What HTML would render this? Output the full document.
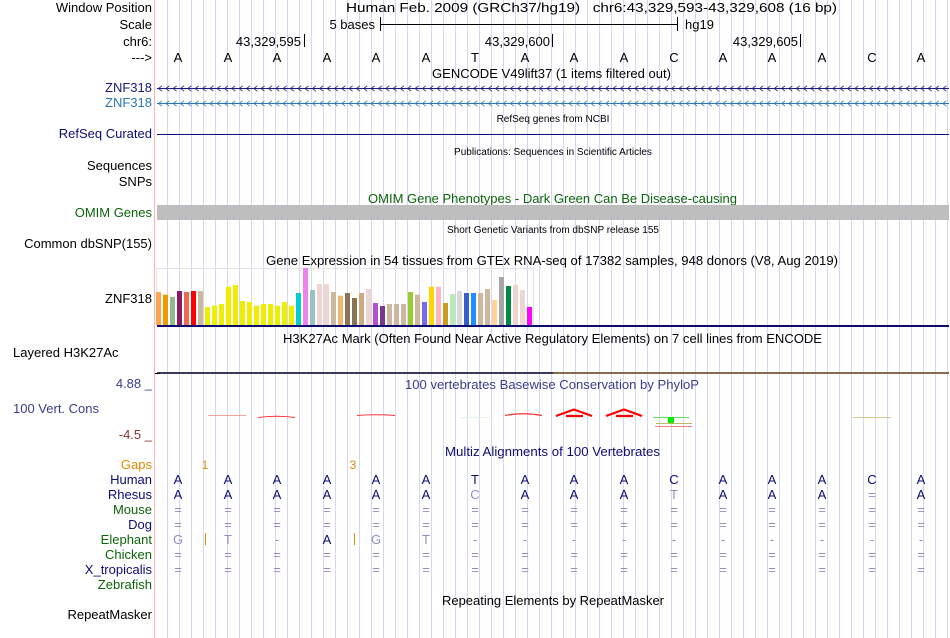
<!DOCTYPE html>
<html><head><meta charset="utf-8"><style>
html,body{margin:0;padding:0;background:#fff;}
svg{display:block;font-family:"Liberation Sans",sans-serif;}
</style></head><body>
<svg width="950" height="638" viewBox="0 0 950 638" xmlns="http://www.w3.org/2000/svg">
<defs>
<pattern id="chevA" x="157" y="84" width="7.33" height="9" patternUnits="userSpaceOnUse"><path d="M5,1.8 L1.5,4.5 L5,7.2" fill="none" stroke="#1a1a80" stroke-width="0.8"/></pattern>
<pattern id="chevB" x="157" y="99" width="7.33" height="9" patternUnits="userSpaceOnUse"><path d="M5,1.8 L1.5,4.5 L5,7.2" fill="none" stroke="#2a78b4" stroke-width="0.8"/></pattern>
</defs>
<rect width="950" height="638" fill="#fff"/>
<g stroke="#d6d6f2" stroke-width="1">
<line x1="167.5" y1="0" x2="167.5" y2="638"/><line x1="179.5" y1="0" x2="179.5" y2="638"/><line x1="191.5" y1="0" x2="191.5" y2="638"/><line x1="203.5" y1="0" x2="203.5" y2="638"/><line x1="215.5" y1="0" x2="215.5" y2="638"/><line x1="227.5" y1="0" x2="227.5" y2="638"/><line x1="239.5" y1="0" x2="239.5" y2="638"/><line x1="251.5" y1="0" x2="251.5" y2="638"/><line x1="263.5" y1="0" x2="263.5" y2="638"/><line x1="275.5" y1="0" x2="275.5" y2="638"/><line x1="287.5" y1="0" x2="287.5" y2="638"/><line x1="299.5" y1="0" x2="299.5" y2="638"/><line x1="311.5" y1="0" x2="311.5" y2="638"/><line x1="323.5" y1="0" x2="323.5" y2="638"/><line x1="335.5" y1="0" x2="335.5" y2="638"/><line x1="347.5" y1="0" x2="347.5" y2="638"/><line x1="359.5" y1="0" x2="359.5" y2="638"/><line x1="371.5" y1="0" x2="371.5" y2="638"/><line x1="383.5" y1="0" x2="383.5" y2="638"/><line x1="395.5" y1="0" x2="395.5" y2="638"/><line x1="407.5" y1="0" x2="407.5" y2="638"/><line x1="419.5" y1="0" x2="419.5" y2="638"/><line x1="431.5" y1="0" x2="431.5" y2="638"/><line x1="443.5" y1="0" x2="443.5" y2="638"/><line x1="455.5" y1="0" x2="455.5" y2="638"/><line x1="467.5" y1="0" x2="467.5" y2="638"/><line x1="479.5" y1="0" x2="479.5" y2="638"/><line x1="491.5" y1="0" x2="491.5" y2="638"/><line x1="503.5" y1="0" x2="503.5" y2="638"/><line x1="515.5" y1="0" x2="515.5" y2="638"/><line x1="527.5" y1="0" x2="527.5" y2="638"/><line x1="539.5" y1="0" x2="539.5" y2="638"/><line x1="551.5" y1="0" x2="551.5" y2="638"/><line x1="563.5" y1="0" x2="563.5" y2="638"/><line x1="575.5" y1="0" x2="575.5" y2="638"/><line x1="587.5" y1="0" x2="587.5" y2="638"/><line x1="599.5" y1="0" x2="599.5" y2="638"/><line x1="611.5" y1="0" x2="611.5" y2="638"/><line x1="623.5" y1="0" x2="623.5" y2="638"/><line x1="635.5" y1="0" x2="635.5" y2="638"/><line x1="647.5" y1="0" x2="647.5" y2="638"/><line x1="659.5" y1="0" x2="659.5" y2="638"/><line x1="671.5" y1="0" x2="671.5" y2="638"/><line x1="683.5" y1="0" x2="683.5" y2="638"/><line x1="695.5" y1="0" x2="695.5" y2="638"/><line x1="707.5" y1="0" x2="707.5" y2="638"/><line x1="719.5" y1="0" x2="719.5" y2="638"/><line x1="731.5" y1="0" x2="731.5" y2="638"/><line x1="743.5" y1="0" x2="743.5" y2="638"/><line x1="755.5" y1="0" x2="755.5" y2="638"/><line x1="767.5" y1="0" x2="767.5" y2="638"/><line x1="779.5" y1="0" x2="779.5" y2="638"/><line x1="791.5" y1="0" x2="791.5" y2="638"/><line x1="803.5" y1="0" x2="803.5" y2="638"/><line x1="815.5" y1="0" x2="815.5" y2="638"/><line x1="827.5" y1="0" x2="827.5" y2="638"/><line x1="839.5" y1="0" x2="839.5" y2="638"/><line x1="851.5" y1="0" x2="851.5" y2="638"/><line x1="863.5" y1="0" x2="863.5" y2="638"/><line x1="875.5" y1="0" x2="875.5" y2="638"/><line x1="887.5" y1="0" x2="887.5" y2="638"/><line x1="899.5" y1="0" x2="899.5" y2="638"/><line x1="911.5" y1="0" x2="911.5" y2="638"/><line x1="923.5" y1="0" x2="923.5" y2="638"/><line x1="935.5" y1="0" x2="935.5" y2="638"/><line x1="947.5" y1="0" x2="947.5" y2="638"/>
</g>
<line x1="154.5" y1="0" x2="154.5" y2="638" stroke="#ffb4b4" stroke-width="1"/>

<g font-size="13" text-anchor="end" fill="#000">
<text x="152" y="12">Window Position</text>
<text x="152" y="29">Scale</text>
<text x="152" y="46">chr6:</text>
<text x="152" y="62">---&gt;</text>
<text x="152" y="92" fill="#1a1a80">ZNF318</text>
<text x="152" y="107" fill="#2a78b4">ZNF318</text>
<text x="152" y="138" fill="#0c0c78">RefSeq Curated</text>
<text x="152" y="170">Sequences</text>
<text x="152" y="186">SNPs</text>
<text x="152" y="217" fill="#0c640c">OMIM Genes</text>
<text x="152" y="248">Common dbSNP(155)</text>
<text x="152" y="303">ZNF318</text>
<text x="152" y="388" fill="#3c3c8c">4.88 _</text>
<text x="152" y="439" fill="#8b3030">-4.5 _</text>
<text x="152" y="469" fill="#e08a00">Gaps</text>
<text x="152" y="484" fill="#0c0c78">Human</text>
<text x="152" y="499" fill="#0c0c78">Rhesus</text>
<text x="152" y="514" fill="#0c640c">Mouse</text>
<text x="152" y="529" fill="#0c0c78">Dog</text>
<text x="152" y="544" fill="#0c640c">Elephant</text>
<text x="152" y="559" fill="#0c640c">Chicken</text>
<text x="152" y="574" fill="#0c0c78">X_tropicalis</text>
<text x="152" y="589" fill="#0c640c">Zebrafish</text>
<text x="152" y="619">RepeatMasker</text>
</g>
<g font-size="13">
<text x="13" y="357">Layered H3K27Ac</text>
<text x="13" y="413" fill="#3c3c8c">100 Vert. Cons</text>
</g>

<g font-size="13" fill="#000">
<text x="346" y="12" textLength="491" lengthAdjust="spacingAndGlyphs" xml:space="preserve">Human Feb. 2009 (GRCh37/hg19)   chr6:43,329,593-43,329,608 (16 bp)</text>
<text x="375" y="29" text-anchor="end">5 bases</text>
<text x="685" y="29">hg19</text>
<text x="301" y="46" text-anchor="end">43,329,595</text>
<text x="550" y="46" text-anchor="end">43,329,600</text>
<text x="798" y="46" text-anchor="end">43,329,605</text>
</g>
<g stroke="#000" stroke-width="1">
<line x1="380.5" y1="17" x2="380.5" y2="31"/><line x1="677.5" y1="17" x2="677.5" y2="31"/><line x1="380" y1="24.5" x2="677" y2="24.5"/>
<line x1="304.5" y1="34" x2="304.5" y2="47"/><line x1="552.5" y1="34" x2="552.5" y2="47"/><line x1="800.5" y1="34" x2="800.5" y2="47"/>
</g>
<g font-size="13" text-anchor="middle" fill="#000">
<text x="178" y="62">A</text><text x="228" y="62">A</text><text x="277" y="62">A</text><text x="327" y="62">A</text><text x="376" y="62">A</text><text x="426" y="62">A</text><text x="475" y="62">T</text><text x="525" y="62">A</text><text x="574" y="62">A</text><text x="624" y="62">A</text><text x="674" y="62">C</text><text x="723" y="62">A</text><text x="772" y="62">A</text><text x="822" y="62">A</text><text x="872" y="62">C</text><text x="921" y="62">A</text>
</g>
<text x="432" y="78" font-size="13" textLength="239" lengthAdjust="spacingAndGlyphs">GENCODE V49lift37 (1 items filtered out)</text>

<line x1="157" y1="88.5" x2="949" y2="88.5" stroke="#1a1a80"/>
<line x1="157" y1="103.5" x2="949" y2="103.5" stroke="#2a78b4"/>
<rect x="157" y="84" width="792" height="9" fill="url(#chevA)"/>
<rect x="157" y="99" width="792" height="9" fill="url(#chevB)"/>

<text x="553" y="122" font-size="10" text-anchor="middle">RefSeq genes from NCBI</text>
<line x1="157" y1="134.5" x2="949" y2="134.5" stroke="#0c0c78"/>
<text x="553" y="155" font-size="10" text-anchor="middle">Publications: Sequences in Scientific Articles</text>
<text x="368" y="203" font-size="13" fill="#0c640c" textLength="369" lengthAdjust="spacingAndGlyphs">OMIM Gene Phenotypes - Dark Green Can Be Disease-causing</text>
<rect x="157" y="205" width="792" height="15" fill="#bebebe"/>
<text x="553" y="233" font-size="10" text-anchor="middle">Short Genetic Variants from dbSNP release 155</text>
<text x="266" y="265" font-size="13" textLength="572" lengthAdjust="spacingAndGlyphs">Gene Expression in 54 tissues from GTEx RNA-seq of 17382 samples, 948 donors (V8, Aug 2019)</text>

<rect x="156.5" y="268.5" width="377" height="57" fill="none" stroke="#e4e4e4"/>
<g>
<rect x="156" y="292" width="5" height="33" fill="#FFA54F"/>
<rect x="163" y="294.7" width="5" height="30.3" fill="#EE9A00"/>
<rect x="170" y="297" width="5" height="28" fill="#8FBC8F"/>
<rect x="177" y="291" width="5" height="34" fill="#8B1C62"/>
<rect x="184" y="292" width="5" height="33" fill="#EE6A50"/>
<rect x="191" y="291" width="5" height="34" fill="#FF0000"/>
<rect x="198" y="291" width="5" height="34" fill="#CDB79E"/>
<rect x="205" y="307" width="5" height="18" fill="#EEEE00"/>
<rect x="212" y="305.7" width="5" height="19.3" fill="#EEEE00"/>
<rect x="219" y="304" width="5" height="21" fill="#EEEE00"/>
<rect x="226" y="286.7" width="5" height="38.3" fill="#EEEE00"/>
<rect x="233" y="285" width="5" height="40" fill="#EEEE00"/>
<rect x="240" y="301" width="5" height="24" fill="#EEEE00"/>
<rect x="247" y="302" width="5" height="23" fill="#EEEE00"/>
<rect x="254" y="305.7" width="5" height="19.3" fill="#EEEE00"/>
<rect x="261" y="304" width="5" height="21" fill="#EEEE00"/>
<rect x="268" y="304" width="5" height="21" fill="#EEEE00"/>
<rect x="275" y="305.7" width="5" height="19.3" fill="#EEEE00"/>
<rect x="282" y="302" width="5" height="23" fill="#EEEE00"/>
<rect x="289" y="305.7" width="5" height="19.3" fill="#EEEE00"/>
<rect x="296" y="293" width="5" height="32" fill="#00CDCD"/>
<rect x="303" y="268" width="5" height="57" fill="#EE82EE"/>
<rect x="310" y="290" width="5" height="35" fill="#9AC0CD"/>
<rect x="317" y="284" width="5" height="41" fill="#EED5D2"/>
<rect x="324" y="284" width="5" height="41" fill="#EED5D2"/>
<rect x="331" y="292" width="5" height="33" fill="#CDB79E"/>
<rect x="338" y="295.7" width="5" height="29.3" fill="#EEB870"/>
<rect x="345" y="293" width="5" height="32" fill="#8B7355"/>
<rect x="352" y="298" width="5" height="27" fill="#8B7355"/>
<rect x="359" y="293" width="5" height="32" fill="#CDAA7D"/>
<rect x="366" y="289" width="5" height="36" fill="#EED5D2"/>
<rect x="373" y="303" width="5" height="22" fill="#B452CD"/>
<rect x="380" y="306" width="5" height="19" fill="#7A378B"/>
<rect x="387" y="304" width="5" height="21" fill="#CDB79E"/>
<rect x="394" y="304" width="5" height="21" fill="#CDB79E"/>
<rect x="401" y="304" width="5" height="21" fill="#CDB79E"/>
<rect x="408" y="292" width="5" height="33" fill="#9ACD32"/>
<rect x="415" y="294.7" width="5" height="30.3" fill="#CDB79E"/>
<rect x="422" y="302" width="5" height="23" fill="#7B68EE"/>
<rect x="429" y="286.7" width="5" height="38.3" fill="#FFD700"/>
<rect x="436" y="286.7" width="5" height="38.3" fill="#FFB6C1"/>
<rect x="443" y="303" width="5" height="22" fill="#CD9B1D"/>
<rect x="450" y="294" width="5" height="31" fill="#B4EEB4"/>
<rect x="457" y="291" width="5" height="34" fill="#D9D9D9"/>
<rect x="464" y="293" width="5" height="32" fill="#3A5FCD"/>
<rect x="471" y="293" width="5" height="32" fill="#1E90FF"/>
<rect x="478" y="293" width="5" height="32" fill="#CDB79E"/>
<rect x="485" y="289" width="5" height="36" fill="#CDB79E"/>
<rect x="492" y="300" width="5" height="25" fill="#FFD39B"/>
<rect x="499" y="277" width="5" height="48" fill="#A6A6A6"/>
<rect x="506" y="286" width="5" height="39" fill="#008B45"/>
<rect x="513" y="285" width="5" height="40" fill="#EED5D2"/>
<rect x="520" y="290" width="5" height="35" fill="#EED5D2"/>
<rect x="527" y="307" width="5" height="18" fill="#FF00FF"/>
</g>
<rect x="157" y="325" width="792" height="2" fill="#0c0c6c"/>

<text x="283" y="343" font-size="13" textLength="539" lengthAdjust="spacingAndGlyphs">H3K27Ac Mark (Often Found Near Active Regulatory Elements) on 7 cell lines from ENCODE</text>
<rect x="157" y="372" width="396" height="2" fill="#3a3a5a"/>
<rect x="553" y="372" width="396" height="2" fill="#8a6a4a"/>
<line x1="155" y1="373.5" x2="160" y2="373.5" stroke="#000"/>
<text x="405" y="389" font-size="13" fill="#3c3c8c" textLength="294" lengthAdjust="spacingAndGlyphs">100 vertebrates Basewise Conservation by PhyloP</text>

<g fill="none" stroke="#ff3030">
<path d="M208,415.5 L246,415.5" stroke-width="0.8" stroke="#f08080"/>
<path d="M258,417.5 Q277,415 295,417.5" stroke-width="1"/>
<path d="M357,415.5 Q376,414 395,415.5" stroke-width="1"/>
<path d="M505,415.5 Q524,412 542,415.5" stroke-width="1.2"/>
<path d="M556,416 L574,409.5 L592,416 M566,416 L583,416" stroke-width="2.2" stroke="#ff0000"/>
<path d="M606,416 L624,409.5 L642,416 M616,416 L633,416" stroke-width="2.2" stroke="#ff0000"/>
<path d="M655,426.5 L692,426.5" stroke-width="1" stroke="#f08080"/>
</g>
<line x1="460" y1="417.5" x2="490" y2="417.5" stroke="#e4f4e4"/>
<line x1="653" y1="417.5" x2="689" y2="417.5" stroke="#60e060"/>
<rect x="668" y="417" width="6" height="6" fill="#00ee00"/>
<path d="M656,423.5 L692,423.5" stroke="#c0b860" stroke-width="1"/>
<line x1="853" y1="417.5" x2="891" y2="417.5" stroke="#d0c890"/>

<text x="445" y="456" font-size="13" fill="#0c0c78" textLength="215" lengthAdjust="spacingAndGlyphs">Multiz Alignments of 100 Vertebrates</text>
<text x="205" y="469" font-size="12" fill="#e08a00" text-anchor="middle">1</text>
<text x="353" y="469" font-size="12" fill="#e08a00" text-anchor="middle">3</text>

<g font-size="13" text-anchor="middle" fill="#0c0c78">
<text x="178" y="484">A</text><text x="228" y="484">A</text><text x="277" y="484">A</text><text x="327" y="484">A</text><text x="376" y="484">A</text><text x="426" y="484">A</text><text x="475" y="484">T</text><text x="525" y="484">A</text><text x="574" y="484">A</text><text x="624" y="484">A</text><text x="674" y="484">C</text><text x="723" y="484">A</text><text x="772" y="484">A</text><text x="822" y="484">A</text><text x="872" y="484">C</text><text x="921" y="484">A</text>
<text x="178" y="499">A</text><text x="228" y="499">A</text><text x="277" y="499">A</text><text x="327" y="499">A</text><text x="376" y="499">A</text><text x="426" y="499">A</text><text x="475" y="499" fill="#9090c0">C</text><text x="525" y="499">A</text><text x="574" y="499">A</text><text x="624" y="499">A</text><text x="674" y="499" fill="#9090c0">T</text><text x="723" y="499">A</text><text x="772" y="499">A</text><text x="822" y="499">A</text><text x="872" y="499" fill="#9090c0">=</text><text x="921" y="499">A</text>
</g>
<g font-size="13" text-anchor="middle" fill="#9090c0">
<text x="178" y="514">=</text><text x="228" y="514">=</text><text x="277" y="514">=</text><text x="327" y="514">=</text><text x="376" y="514">=</text><text x="426" y="514">=</text><text x="475" y="514">=</text><text x="525" y="514">=</text><text x="574" y="514">=</text><text x="624" y="514">=</text><text x="674" y="514">=</text><text x="723" y="514">=</text><text x="772" y="514">=</text><text x="822" y="514">=</text><text x="872" y="514">=</text><text x="921" y="514">=</text>
<text x="178" y="529">=</text><text x="228" y="529">=</text><text x="277" y="529">=</text><text x="327" y="529">=</text><text x="376" y="529">=</text><text x="426" y="529">=</text><text x="475" y="529">=</text><text x="525" y="529">=</text><text x="574" y="529">=</text><text x="624" y="529">=</text><text x="674" y="529">=</text><text x="723" y="529">=</text><text x="772" y="529">=</text><text x="822" y="529">=</text><text x="872" y="529">=</text><text x="921" y="529">=</text>
<text x="178" y="544">G</text><text x="228" y="544">T</text><text x="277" y="544">-</text><text x="327" y="544" fill="#0c0c78">A</text><text x="376" y="544">G</text><text x="426" y="544">T</text><text x="475" y="544">-</text><text x="525" y="544">-</text><text x="574" y="544">-</text><text x="624" y="544">-</text><text x="674" y="544">-</text><text x="723" y="544">-</text><text x="772" y="544">-</text><text x="822" y="544">-</text><text x="872" y="544">-</text><text x="921" y="544">-</text>
<text x="178" y="559">=</text><text x="228" y="559">=</text><text x="277" y="559">=</text><text x="327" y="559">=</text><text x="376" y="559">=</text><text x="426" y="559">=</text><text x="475" y="559">=</text><text x="525" y="559">=</text><text x="574" y="559">=</text><text x="624" y="559">=</text><text x="674" y="559">=</text><text x="723" y="559">=</text><text x="772" y="559">=</text><text x="822" y="559">=</text><text x="872" y="559">=</text><text x="921" y="559">=</text>
<text x="178" y="574">=</text><text x="228" y="574">=</text><text x="277" y="574">=</text><text x="327" y="574">=</text><text x="376" y="574">=</text><text x="426" y="574">=</text><text x="475" y="574">=</text><text x="525" y="574">=</text><text x="574" y="574">=</text><text x="624" y="574">=</text><text x="674" y="574">=</text><text x="723" y="574">=</text><text x="772" y="574">=</text><text x="822" y="574">=</text><text x="872" y="574">=</text><text x="921" y="574">=</text>
</g>
<line x1="205.5" y1="533" x2="205.5" y2="545" stroke="#e08a00"/>
<line x1="354.5" y1="533" x2="354.5" y2="545" stroke="#e08a00"/>

<text x="442" y="605" font-size="13" textLength="222" lengthAdjust="spacingAndGlyphs">Repeating Elements by RepeatMasker</text>
</svg>
</body></html>
